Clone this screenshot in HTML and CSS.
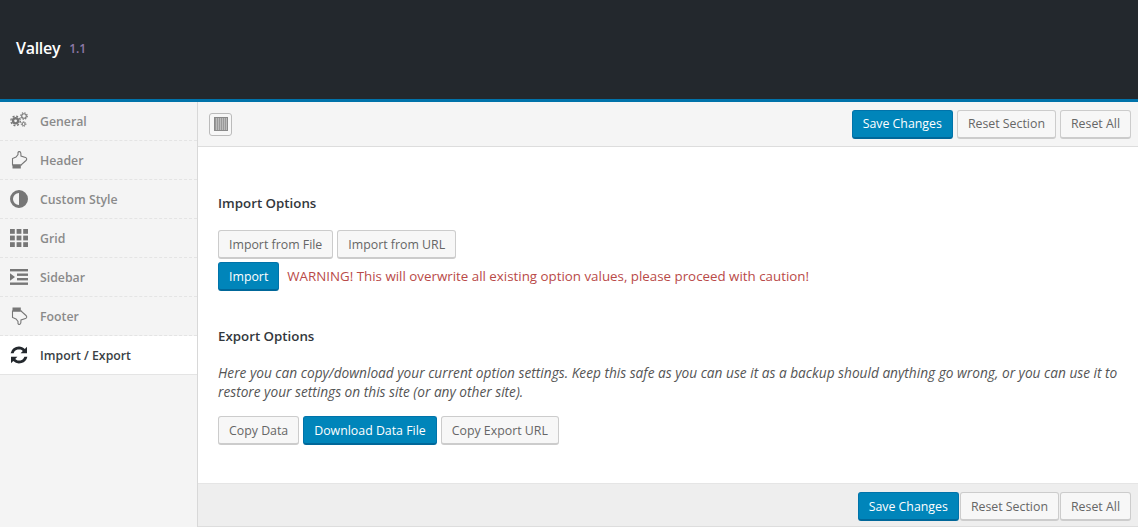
FILE: index.html
```html
<!DOCTYPE html>
<html lang="en">
<head>
<meta charset="utf-8">
<title>Valley Options</title>
<link rel="stylesheet" href="styles.css">
</head>
<body>
<header class="masthead">
  <span class="brand">Valley</span><span class="version">1.1</span>
</header>
<div class="panel">
  <nav class="sidebar">
    <a class="nav-item"><svg class="nav-icon" viewBox="0 0 18 18"><g fill="none" stroke="#777"><circle cx="5.600" cy="8.800" r="2.600" stroke-width="2.400"/><circle cx="5.600" cy="8.800" r="4.700" stroke-width="1.400" stroke-dasharray="2 1.690"/><circle cx="14" cy="4" r="2.300" stroke-width="1.100"/><circle cx="14" cy="4" r="3.300" stroke-width="1.100" stroke-dasharray="1.300 1.290"/><circle cx="13.600" cy="12" r="1.500" stroke-width="1"/><circle cx="13.600" cy="12" r="2.300" stroke-width="1" stroke-dasharray="1 .8"/></g></svg><span>General</span></a>
    <a class="nav-item"><svg class="nav-icon" viewBox="0 0 18 18"><path d="M2.500 14V7.500L6 6l2-2.500V1.500C8.500 0 10.500.5 10.800 2L11 5l4.500 1.500C17 7 17 8.500 16 9.500L11.500 13.500V14z" fill="none" stroke="#777" stroke-width="1.100"/><rect x="2.500" y="13.500" width="8.300" height="4" fill="#777"/></svg><span>Header</span></a>
    <a class="nav-item"><svg class="nav-icon" viewBox="0 0 18 18"><path fill="#777" fill-rule="evenodd" d="M9 0a9 9 0 100 18A9 9 0 009 0zm0 3v12a6 6 0 010-12z"/></svg><span>Custom Style</span></a>
    <a class="nav-item"><svg class="nav-icon" viewBox="0 0 18 18"><g fill="#777"><rect width="4.800" height="4.800"/><rect x="6.600" width="4.800" height="4.800"/><rect x="13.200" width="4.800" height="4.800"/><rect y="6.600" width="4.800" height="4.800"/><rect x="6.600" y="6.600" width="4.800" height="4.800"/><rect x="13.200" y="6.600" width="4.800" height="4.800"/><rect y="13.200" width="4.800" height="4.800"/><rect x="6.600" y="13.200" width="4.800" height="4.800"/><rect x="13.200" y="13.200" width="4.800" height="4.800"/></g></svg><span>Grid</span></a>
    <a class="nav-item"><svg class="nav-icon" viewBox="0 0 18 16"><g fill="#777"><rect width="18" height="2.400"/><rect x="7" y="4.500" width="11" height="2.400"/><rect x="7" y="9" width="11" height="2.400"/><rect y="13.500" width="18" height="2.400"/><path d="M0 4.200l5 3.800-5 3.800z"/></g></svg><span>Sidebar</span></a>
    <a class="nav-item"><svg class="nav-icon" viewBox="0 0 18 18"><g transform="matrix(1 0 0 -1 0 18)"><path d="M2.500 14V7.500L6 6l2-2.500V1.500C8.500 0 10.500.5 10.800 2L11 5l4.500 1.500C17 7 17 8.500 16 9.500L11.500 13.500V14z" fill="none" stroke="#777" stroke-width="1.100"/><rect x="2.500" y="13.500" width="8.300" height="4" fill="#777"/></g></svg><span>Footer</span></a>
    <a class="nav-item active"><svg class="nav-icon" viewBox="0 0 18 18"><path fill="#23282d" d="M9 0.500c2.300 0 4.300.9 5.800 2.400L17 .8v6.400h-6.400l2.200-2.200A5.600 5.600 0 003.600 7.200H.6A8.500 8.500 0 019 .5zM1 10.800h6.400l-2.200 2.200a5.600 5.600 0 009.200-2.200h3A8.500 8.500 0 013.200 15.100L1 17.200z"/></svg><span>Import / Export</span></a>
  </nav>
  <main class="content">
    <div class="toolbar">
      <button class="toggle" aria-label="Toggle"><span class="toggle-glyph"></span></button>
      <div class="actions">
        <button class="btn primary">Save Changes</button>
        <button class="btn">Reset Section</button>
        <button class="btn">Reset All</button>
      </div>
    </div>
    <div class="body">
      <h3 class="section-title">Import Options</h3>
      <div class="btn-row">
        <button class="btn">Import from File</button>
        <button class="btn">Import from URL</button>
      </div>
      <div class="import-row">
        <button class="btn primary">Import</button>
        <span class="warning">WARNING! This will overwrite all existing option values, please proceed with caution!</span>
      </div>
      <h3 class="section-title export-title">Export Options</h3>
      <p class="note">Here you can copy/download your current option settings. Keep this safe as you can use it as a backup should anything go wrong, or you can use it to restore your settings on this site (or any other site).</p>
      <div class="btn-row">
        <button class="btn">Copy Data</button>
        <button class="btn primary">Download Data File</button>
        <button class="btn">Copy Export URL</button>
      </div>
    </div>
    <div class="footer-bar">
      <button class="btn primary">Save Changes</button>
      <button class="btn">Reset Section</button>
      <button class="btn">Reset All</button>
    </div>
  </main>
</div>
</body>
</html>
```
FILE: styles.css
```css
* { box-sizing: border-box; }
html, body { margin: 0; height: 100%; overflow: hidden; }
body { font-family: "Open Sans", "Noto Sans", sans-serif; font-size: 13px; color: #444; background: #fff; }

.masthead { height: 102px; background: #23282d; border-bottom: 3px solid #0073aa; padding: 0 16px 3px; display: flex; align-items: center; }
.brand { color: #fff; font-size: 16px; font-weight: 600; letter-spacing: -0.300px; }
.version { color: #8f7aa8; font-size: 12px; margin-left: 9px; font-weight: 600; }

.panel { display: flex; height: 425px; }
.sidebar { width: 198px; background: #f4f4f4; border-right: 1px solid #d8d8d8; flex: none; }
.nav-item { display: flex; align-items: center; height: 39px; padding-left: 10px; gap: 12px; color: #8a8a8a; font-weight: 600; font-size: 12.300px; border-bottom: 1px dashed #e4e4e4; }
.nav-item.active { background: #fff; color: #3a3f44; border-bottom: 1px solid #e4e4e4; }
.nav-icon { width: 18px; height: 18px; flex: none; }

.content { flex: 1; display: flex; flex-direction: column; min-width: 0; }
.toolbar { height: 45px; flex: none; background: #f5f5f5; border-bottom: 1px solid #ddd; display: flex; align-items: center; justify-content: space-between; padding: 0 7px 0 11px; }
.toggle { width: 23px; height: 23px; padding: 0; border: 1px solid #bbb; border-radius: 3px; background: #f7f7f7; display: flex; align-items: center; justify-content: center; }
.toggle-glyph { width: 14px; height: 14px; border: 1px solid #8a8a8a; background: repeating-linear-gradient(90deg, #999 0 1px, #bbb 1px 2px); }
.actions { display: flex; gap: 4px; }

.btn { height: 29px; padding: 0 10px; font: 12.350px "Open Sans", "Noto Sans", sans-serif; color: #666; background: #f7f7f7; border: 1px solid #ccc; border-bottom-width: 2px; border-radius: 3px; white-space: nowrap; }
.btn.primary { background: #0085ba; border-color: #0073aa; border-bottom-color: #006799; color: #fff; }

.body { flex: 1; padding: 47px 15px 0 20px; }
.section-title { margin: 0; font-size: 13.300px; line-height: 18px; font-weight: 600; color: #32373c; }
.btn-row { display: flex; gap: 4px; margin-top: 18px; }
.import-row { display: flex; align-items: center; gap: 8px; margin-top: 3px; }
.warning { color: #b94a48; font-size: 13.330px; padding-bottom: 2px; }
.export-title { margin-top: 36px; }
.note { margin: 18px 0 0; font-style: italic; line-height: 19px; color: #555; font-size: 13.700px; }
.note + .btn-row { margin-top: 15px; }

.footer-bar { height: 44px; flex: none; background: #eee; border-top: 1px solid #e5e5e5; border-bottom: 1px solid #ddd; display: flex; align-items: flex-start; justify-content: flex-end; gap: 1px; padding: 8px 7px 0 0; }
```
